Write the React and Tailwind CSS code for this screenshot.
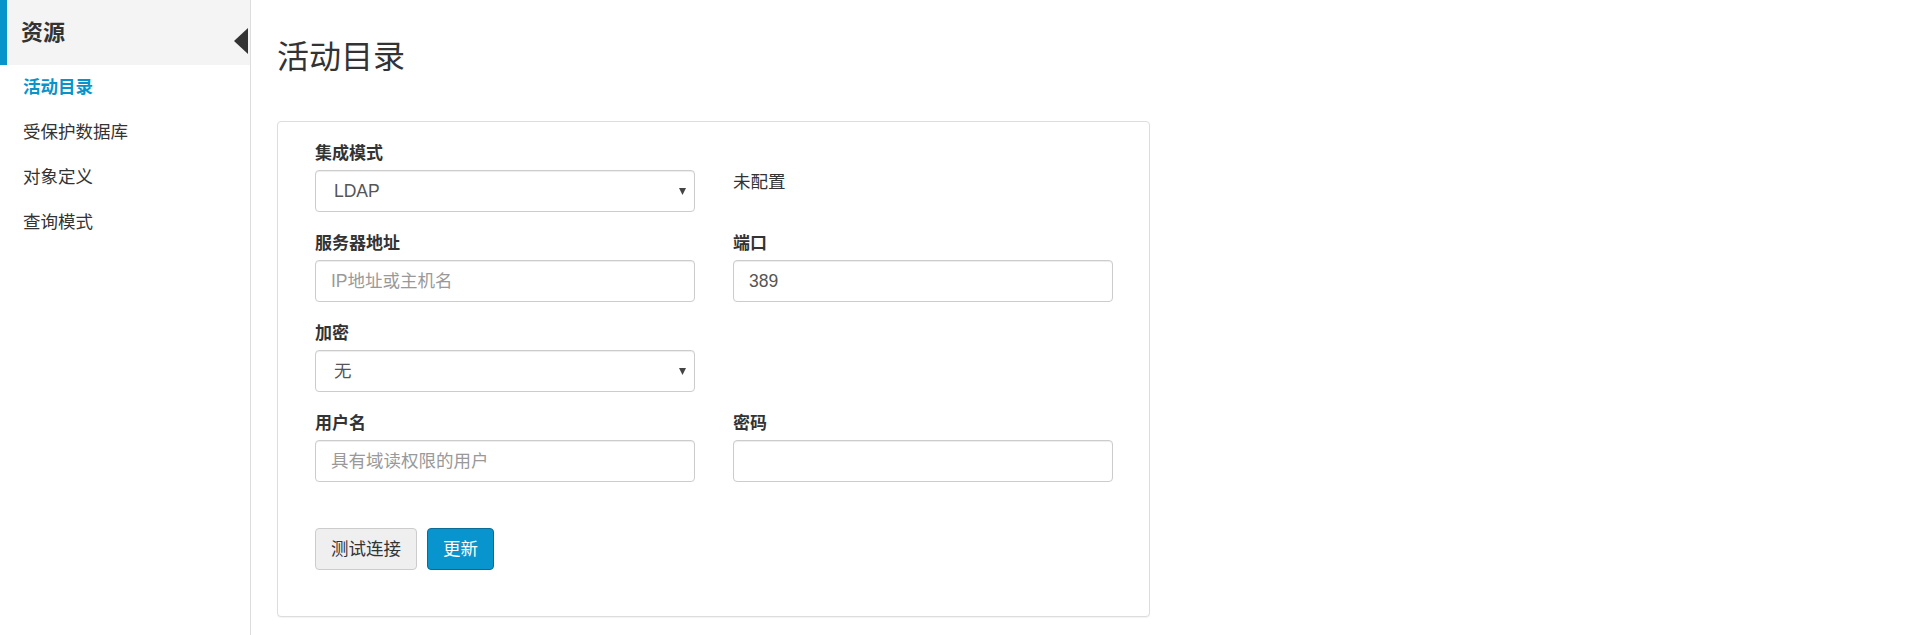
import React from 'react';

const FONT = 'font-["Liberation_Sans","Noto_Sans_CJK_SC",sans-serif]';

const navItems = [
  { label: '活动目录', active: true },
  { label: '受保护数据库' },
  { label: '对象定义' },
  { label: '查询模式' },
];

const Label = ({ children }) => (
  <div className="h-[25px] mb-[4px] text-[17px] font-bold leading-[25px] text-[#333]">{children}</div>
);

const TextInput = ({ value, placeholder }) => (
  <div className="h-[42px] flex items-center border border-[#ccc] rounded-[4px] px-[15px] text-[17.5px] shadow-[inset_0_1px_1px_rgba(0,0,0,0.075)]">
    {value ? <span className="text-[#555]">{value}</span> : <span className="text-[#999]">{placeholder}</span>}
  </div>
);

const SelectBox = ({ value }) => (
  <div className="h-[42px] flex items-center justify-between border border-[#ccc] rounded-[4px] pl-[18px] pr-[8px] text-[17.5px] text-[#555] shadow-[inset_0_1px_1px_rgba(0,0,0,0.075)]">
    <span>{value}</span>
    <svg width="7" height="7" viewBox="0 0 7 7">
      <path d="M0 0 L7 0 L3.5 7 Z" fill="#444" />
    </svg>
  </div>
);

const App = () => {
  return (
    <div className={`flex min-h-[635px] bg-white text-[#333] ${FONT}`}>
      {/* sidebar */}
      <aside className="w-[251px] shrink-0 border-r border-[#ddd]">
        <div className="relative h-[65px] bg-[#f4f4f4] border-l-[7px] border-[#0893cb] flex items-center pl-[14px] text-[22px] font-bold text-[#333]">
          资源
          <span className="absolute right-[2px] top-[28px] w-0 h-0 border-y-[13px] border-y-transparent border-r-[14px] border-r-[#333]" />
        </div>
        <nav>
          {navItems.map((item) => (
            <div
              key={item.label}
              className={`h-[45px] flex items-center pl-[23px] text-[17.5px] ${item.active ? 'text-[#0893cb] font-bold' : 'text-[#333]'}`}
            >
              {item.label}
            </div>
          ))}
        </nav>
      </aside>

      {/* main */}
      <main className="flex-1 pl-[26px]">
        <h1 className="mt-[37px] h-[40px] text-[32px] leading-[40px] font-normal text-[#333]">活动目录</h1>

        <div className="mt-[44px] w-[873px] border border-[#ddd] rounded-[4px] bg-white pt-[19px] pb-[46px] pl-[37px] pr-[36px] shadow-[0_1px_1px_rgba(0,0,0,0.05)]">
          <div className="grid grid-cols-[380px_380px] gap-x-[38px] gap-y-[19px]">
            <div>
              <Label>集成模式</Label>
              <SelectBox value="LDAP" />
            </div>
            <div>
              <div className="h-[25px] mb-[4px]" />
              <div className="text-[17.5px] leading-[24px] text-[#333]">未配置</div>
            </div>

            <div>
              <Label>服务器地址</Label>
              <TextInput placeholder="IP地址或主机名" />
            </div>
            <div>
              <Label>端口</Label>
              <TextInput value="389" />
            </div>

            <div>
              <Label>加密</Label>
              <SelectBox value="无" />
            </div>
            <div />

            <div>
              <Label>用户名</Label>
              <TextInput placeholder="具有域读权限的用户" />
            </div>
            <div>
              <Label>密码</Label>
              <TextInput />
            </div>
          </div>

          <div className="mt-[46px] flex gap-[10px]">
            <button className="h-[42px] px-[15px] border border-[#ccc] rounded-[4px] bg-[#efefef] text-[17.5px] text-[#333]">
              测试连接
            </button>
            <button className="h-[42px] px-[15px] border border-[#0a6d97] rounded-[4px] bg-[#0894cc] text-[17.5px] text-white">
              更新
            </button>
          </div>
        </div>
      </main>
    </div>
  );
};

export default App;
